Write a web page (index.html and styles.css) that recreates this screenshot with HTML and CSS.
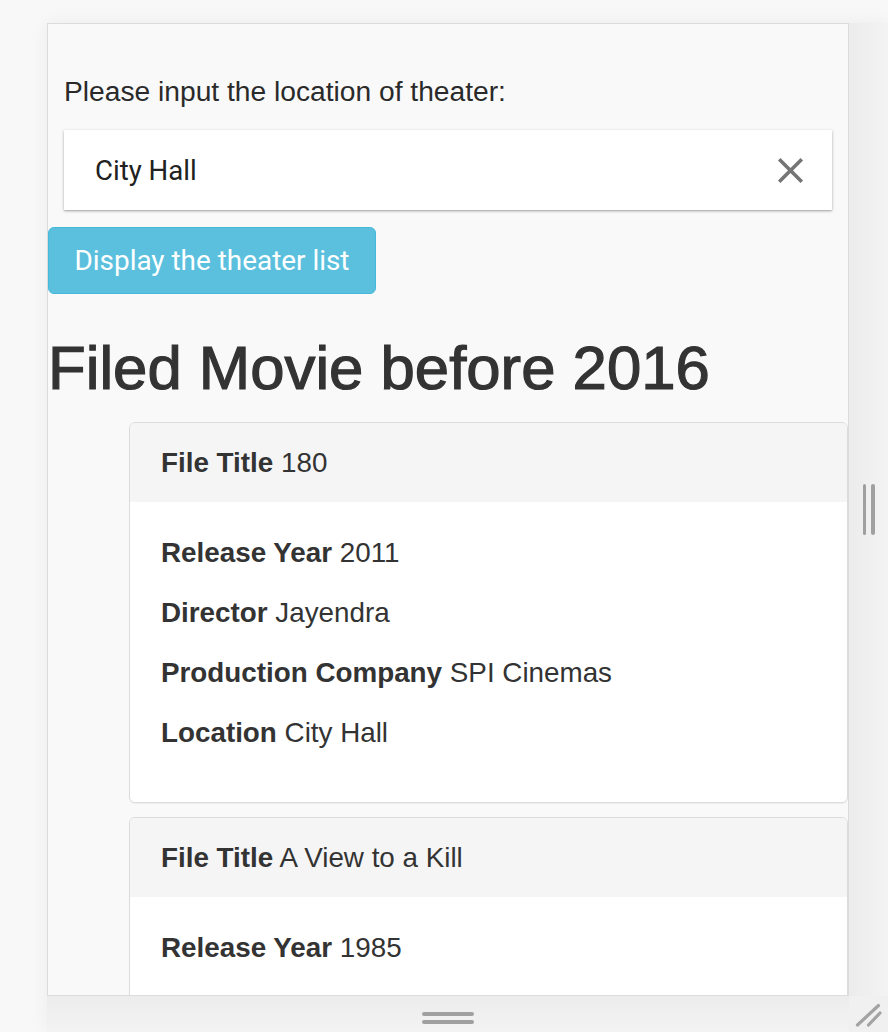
FILE: index.html
```html
<!DOCTYPE html>
<html>
<head>
<meta charset="utf-8">
<title>Theater</title>
<link rel="stylesheet" href="styles.css">
</head>
<body>
<div class="device">
  <div class="frame">
    <div class="form-group">
      <div class="label">Please input the location of theater:</div>
      <div class="search">
        <span class="search-text">City Hall</span>
        <svg class="clear" viewBox="0 0 24 24" width="43" height="43"><path d="M19 6.41L17.59 5 12 10.59 6.41 5 5 6.41 10.59 12 5 17.59 6.41 19 12 13.41 17.59 19 19 17.59 13.41 12z"/></svg>
      </div>
    </div>
    <button class="btn">Display the theater list</button>
    <h1 class="title">Filed Movie before 2016</h1>
    <div class="cards">
      <div class="card">
        <div class="card-head"><b>File Title</b> 180</div>
        <div class="card-body">
          <p><b>Release Year</b> 2011</p>
          <p><b>Director</b> Jayendra</p>
          <p><b>Production Company</b> SPI Cinemas</p>
          <p><b>Location</b> City Hall</p>
        </div>
      </div>
      <div class="card">
        <div class="card-head"><b>File Title</b> A View to a Kill</div>
        <div class="card-body">
          <p><b>Release Year</b> 1985</p>
          <p><b>Director</b> John Glen</p>
          <p><b>Production Company</b> Eon Productions</p>
          <p><b>Location</b> City Hall</p>
        </div>
      </div>
    </div>
  </div>
  <div class="side-handle"><span></span><span></span></div>
  <div class="bottom-handle"><span></span><span></span></div>
  <div class="corner">
    <svg width="39" height="36" viewBox="0 0 39 36"><path d="M8.5 29 L29.5 9.5 M19.5 29 L31 17" stroke="#a3a3a3" stroke-width="3.2" stroke-linecap="round" fill="none"/></svg>
  </div>
</div>
</body>
</html>
```
FILE: styles.css
```css
html, body {
  margin: 0;
  padding: 0;
}
body {
  background: #f8f8f8;
  width: 888px;
  height: 1032px;
  overflow: hidden;
  font-family: "Liberation Sans", Arial, Helvetica, sans-serif;
  color: #333;
}
.device {
  margin: 23px 0 0 47px;
  display: grid;
  grid-template-columns: 802px 39px;
  grid-template-rows: 973px 36px;
  box-shadow: 0 0 18px rgba(0, 0, 0, 0.05);
}
.frame {
  box-sizing: border-box;
  border: 1px solid #dcdcdc;
  background: #f9f9f9;
  overflow: hidden;
}
.form-group {
  padding: 47px 16px 0;
}
.label {
  font-size: 28.2px;
  line-height: 40px;
  color: #2a2a2a;
}
.search {
  margin-top: 19px;
  height: 80px;
  background: #fff;
  box-shadow: 0 1px 3px rgba(0, 0, 0, 0.28), 0 1px 1px rgba(0, 0, 0, 0.1);
  display: flex;
  align-items: center;
  padding: 0 20px 0 31px;
}
.search-text {
  flex: 1;
  font-family: Roboto, "Noto Sans", sans-serif;
  font-size: 27.6px;
  color: #212121;
}
.clear {
  fill: #757575;
}
.btn {
  display: block;
  margin: 17px 0 0 0;
  width: 328px;
  height: 67px;
  box-sizing: border-box;
  background: #5bc0de;
  border: 1px solid #46b8da;
  border-radius: 6px;
  color: #fff;
  font-family: Roboto, "Noto Sans", sans-serif;
  font-size: 27.9px;
  padding: 0;
  text-align: center;
}
.title {
  margin: 41px 0 21px 0;
  font-size: 61.7px;
  line-height: 66px;
  font-weight: normal;
  -webkit-text-stroke: 1.2px #333;
  color: #333;
}
.cards {
  margin-left: 81px;
  display: flex;
  flex-direction: column;
  gap: 14px;
}
.card {
  border: 1px solid #dcdcdc;
  border-radius: 6px;
  background: #fff;
  overflow: hidden;
  box-shadow: 0 1px 1px rgba(0, 0, 0, 0.05);
}
.card-head {
  height: 79px;
  box-sizing: border-box;
  background: #f5f5f5;
  padding: 0 31px;
  display: flex;
  align-items: center;
  font-size: 27.8px;
  white-space: pre;
}
.card-body {
  padding: 34px 31px 26px;
}
.card-body p {
  margin: 0 0 26px;
  font-size: 27.8px;
  line-height: 34px;
}
.side-handle {
  background: linear-gradient(to right, #ececec, #f3f3f3);
  display: flex;
  justify-content: center;
  align-items: center;
  gap: 5px;
}
.side-handle span {
  width: 3.5px;
  height: 51px;
  border-radius: 2px;
  background: #a0a0a0;
}
.bottom-handle {
  background: linear-gradient(to bottom, #ececec, #f3f3f3);
  display: flex;
  flex-direction: column;
  align-items: center;
  justify-content: flex-start;
  gap: 4.5px;
  padding-top: 16px;
  box-sizing: border-box;
}
.bottom-handle span {
  width: 52px;
  height: 3.5px;
  border-radius: 2px;
  background: #a0a0a0;
}
.corner {
  background: #f0f0f0;
}
.corner svg {
  display: block;
}
```
